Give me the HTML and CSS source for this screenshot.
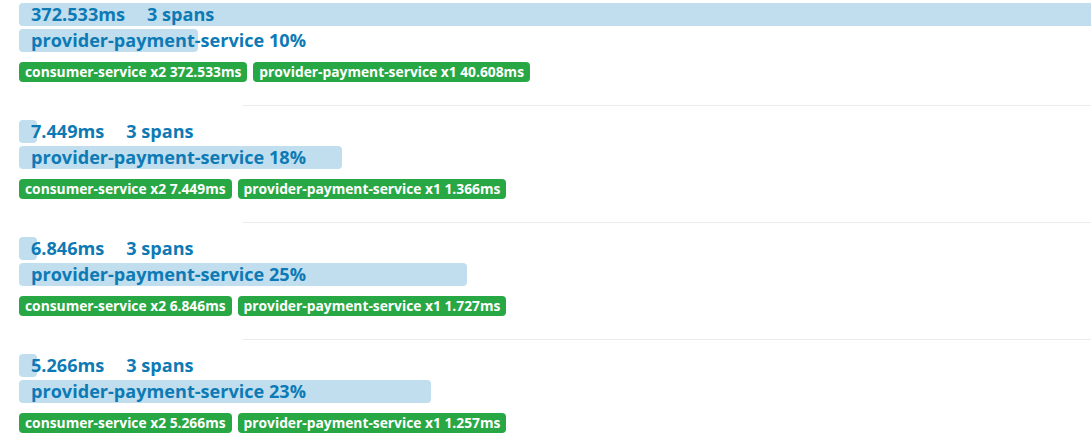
FILE: index.html
```html
<!DOCTYPE html>
<html lang="en">
<head>
  <meta charset="UTF-8">
  <title>Traces</title>
  <link rel="stylesheet" href="styles.css">
</head>
<body>
  <div class="trace-list">
    <div class="trace">
      <div class="bar duration" style="width: 100%"><span>372.533ms</span><span class="spans">3 spans</span></div>
      <div class="bar service" style="width: 10%"><span>provider-payment-service 10%</span></div>
      <div class="badges">
        <span class="badge">consumer-service x2 372.533ms</span>
        <span class="badge">provider-payment-service x1 40.608ms</span>
      </div>
    </div>
    <hr class="sep">
    <div class="trace">
      <div class="bar duration min"><span>7.449ms</span><span class="spans">3 spans</span></div>
      <div class="bar service" style="width: 18%"><span>provider-payment-service 18%</span></div>
      <div class="badges">
        <span class="badge">consumer-service x2 7.449ms</span>
        <span class="badge">provider-payment-service x1 1.366ms</span>
      </div>
    </div>
    <hr class="sep">
    <div class="trace">
      <div class="bar duration min"><span>6.846ms</span><span class="spans">3 spans</span></div>
      <div class="bar service" style="width: 25%"><span>provider-payment-service 25%</span></div>
      <div class="badges">
        <span class="badge">consumer-service x2 6.846ms</span>
        <span class="badge">provider-payment-service x1 1.727ms</span>
      </div>
    </div>
    <hr class="sep">
    <div class="trace">
      <div class="bar duration min"><span>5.266ms</span><span class="spans">3 spans</span></div>
      <div class="bar service" style="width: 23%"><span>provider-payment-service 23%</span></div>
      <div class="badges">
        <span class="badge">consumer-service x2 5.266ms</span>
        <span class="badge">provider-payment-service x1 1.257ms</span>
      </div>
    </div>
  </div>
</body>
</html>
```

FILE: styles.css
```css
body {
  margin: 0;
  font-family: 'Open Sans', 'Noto Sans', sans-serif;
  background-color: #ffffff;
  overflow: hidden;
}

.trace-list {
  width: 1792px;
  padding-left: 19px;
  padding-top: 3px;
}

.bar {
  height: 23px;
  line-height: 23px;
  background-color: #c0deee;
  border-radius: 4px;
  color: #0d7ab5;
  font-size: 18.1px;
  font-weight: 700;
  white-space: nowrap;
  padding-left: 12px;
  box-sizing: border-box;
}

.bar.min {
  width: 18px;
}

.bar.service {
  margin-top: 3px;
}

.spans {
  margin-left: 22px;
}

.badges {
  display: flex;
  gap: 6px;
  margin-top: 10px;
}

.badge {
  background-color: #28a745;
  color: #ffffff;
  font-size: 13.8px;
  font-weight: 700;
  line-height: 20px;
  padding: 0 6px;
  border-radius: 4px;
  white-space: nowrap;
}

.sep {
  border: none;
  border-top: 1px solid #ebebeb;
  margin: 23px 0 14px 224px;
}
```
